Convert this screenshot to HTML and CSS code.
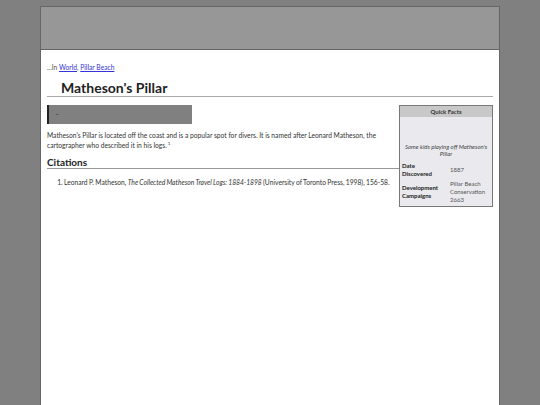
FILE: index.html
```html
<!DOCTYPE html>
<html lang="en-US">
<head>
<title>Matheson's Pillar</title>
<link rel="stylesheet" href="styles.css">
</head>
<body>
<div class="page">
  <div class="masthead"></div>

  <div class="article">
    <div class="crumbs">...In <a href="#">World</a>, <a href="#">Pillar Beach</a></div>
    <h1>Matheson's Pillar</h1>

    <div class="infobox">
      <div class="infotitle">Quick Facts</div>
      <div class="infocaption">Some kids playing off Matheson's Pillar</div>
      <table>
        <tr><th>Date Discovered</th><td>1887</td></tr>
        <tr><th>Development Campaigns</th><td>Pillar Beach Conservation 2663</td></tr>
      </table>
    </div>

    <div class="notice">&ndash;</div>

    <p>Matheson's Pillar is located off the coast and is a popular spot for divers. It is named after Leonard Matheson, the cartographer who described it in his logs.<sup>1</sup></p>

    <h2>Citations</h2>
    <ol>
      <li>Leonard P. Matheson, <em>The Collected Matheson Travel Logs: 1884-1898</em> (University of Toronto Press, 1998), 156-58.</li>
    </ol>
  </div>
</div>
</body>
</html>
```

FILE: styles.css
```css
html, body {
  height: 100%;
}
body {
  margin: 0;
  background-color: #808080;
  font-family: Lato, "Noto Sans", sans-serif;
  color: #333;
}
.page {
  margin: 6px 40px 0;
  min-height: calc(100% - 6px);
  box-sizing: border-box;
  background-color: white;
  border: 1px solid #666;
  border-bottom: none;
}
.masthead {
  height: 42px;
  background-color: #979797;
  border-bottom: 1px solid #666;
}
.article {
  padding: 0 6px;
  font-size: 6.7px;
  line-height: 10px;
}
.crumbs {
  margin-top: 12px;
  color: #555;
}
.crumbs a {
  color: #3434d8;
}
h1 {
  margin: 8px 0 8px;
  padding-left: 14px;
  font-size: 14px;
  line-height: 16px;
  color: #222;
  border-bottom: 1px solid #aaa;
}
.notice {
  width: 137px;
  height: 19px;
  background-color: #808080;
  border-left: 2px solid #222;
  padding-left: 6px;
  line-height: 19px;
  color: #333;
}
p {
  margin: 6px 0;
}
sup {
  font-size: 4.5px;
  line-height: 0;
  margin-left: 1px;
}
h2 {
  margin: 6px 0 8px;
  font-size: 10px;
  line-height: 12px;
  color: #222;
  border-bottom: 1px solid #999;
}
ol {
  margin: 0;
  padding-left: 17px;
  word-spacing: -0.3px;
}
.infobox {
  float: right;
  width: 92px;
  margin-left: 5px;
  border: 1px solid #777;
  background-color: #e9e9ee;
  font-size: 6px;
  line-height: 8px;
}
.infotitle {
  background-color: #c8c8c8;
  text-align: center;
  font-weight: bold;
  line-height: 11px;
  color: #333;
}
.infocaption {
  margin-top: 26px;
  padding: 0 1px;
  text-align: center;
  font-style: italic;
  line-height: 7px;
  color: #444;
}
.infobox table {
  border-collapse: collapse;
  margin: 4px 0 1px;
}
.infobox th {
  text-align: left;
  padding: 1px 2px;
  width: 40px;
  color: #222;
}
.infobox td {
  padding: 1px 2px 1px 6px;
  color: #555;
}
```
